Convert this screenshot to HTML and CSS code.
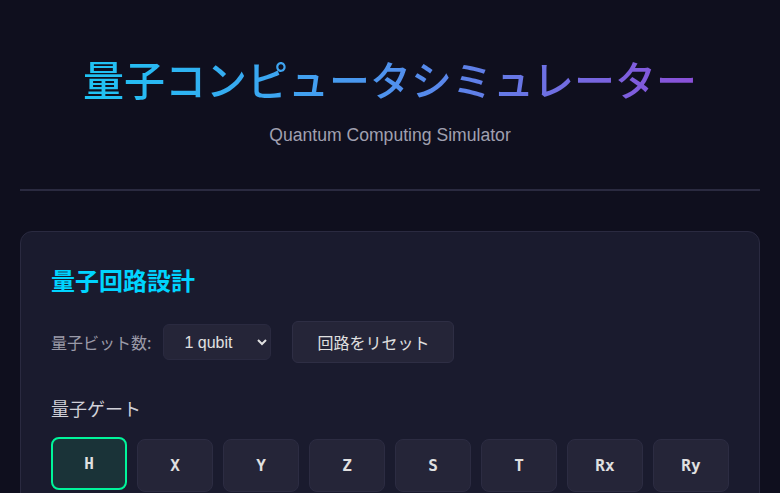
FILE: index.html
```html
<!DOCTYPE html>
<html lang="ja">
<head>
<meta charset="utf-8">
<title>量子コンピュータシミュレーター</title>
<link rel="stylesheet" href="styles.css">
</head>
<body>
<div class="app">
  <header class="header">
    <h1 class="title">量子コンピュータシミュレーター</h1>
    <p class="subtitle">Quantum Computing Simulator</p>
  </header>
  <hr class="divider">
  <section class="card">
    <h2 class="card-title">量子回路設計</h2>
    <div class="controls">
      <label class="label" for="qubits">量子ビット数:</label>
      <select id="qubits" class="select">
        <option>1 qubit</option>
        <option>2 qubits</option>
        <option>3 qubits</option>
      </select>
      <button class="btn">回路をリセット</button>
    </div>
    <h3 class="section-title">量子ゲート</h3>
    <div class="gates">
      <button class="gate gate-active">H</button>
      <button class="gate">X</button>
      <button class="gate">Y</button>
      <button class="gate">Z</button>
      <button class="gate">S</button>
      <button class="gate">T</button>
      <button class="gate">Rx</button>
      <button class="gate">Ry</button>
    </div>
  </section>
</div>
</body>
</html>
```

FILE: styles.css
```css
* { box-sizing: border-box; }
html, body { margin: 0; padding: 0; }
body {
  background: #0f0f1e;
  color: #e0e0e0;
  font-family: "Liberation Sans", "Noto Sans CJK JP", sans-serif;
  overflow: hidden;
}
.app { padding: 20px; }
.header { text-align: center; }
.title {
  display: inline-block;
  margin: 33px 0 0;
  font-family: "Noto Sans CJK JP", sans-serif;
  font-size: 41px;
  font-weight: 500;
  line-height: 50px;
  background: linear-gradient(90deg, #1ec4f4 0%, #4f92ee 50%, #8b4fd8 100%);
  -webkit-background-clip: text;
  background-clip: text;
  color: transparent;
}
.subtitle {
  margin: 21px 0 0;
  font-size: 17.6px;
  line-height: 22px;
  color: #a0a0b0;
}
.divider {
  margin: 43px 0 0;
  border: 0;
  height: 2px;
  background: #2a2a40;
}
.card {
  margin-top: 40px;
  background: #1a1b2e;
  border: 1px solid #2a2a40;
  border-radius: 12px;
  padding: 30px;
  min-height: 300px;
}
.card-title {
  margin: 0;
  font-family: "Noto Sans CJK JP", sans-serif;
  font-size: 24px;
  font-weight: 700;
  line-height: 36px;
  color: #00d4ff;
}
.controls {
  margin-top: 23px;
  display: flex;
  align-items: center;
  gap: 12px;
}
.label {
  font-family: "Noto Sans CJK JP", "Liberation Sans", sans-serif;
  font-size: 16px;
  color: #9a9aa8;
}
.select {
  width: 108px;
  height: 36px;
  padding: 0 12px 0 16px;
  background-color: #252538;
  color: #e0e0e0;
  border: 1px solid #2a2a40;
  border-radius: 6px;
  font-family: "Liberation Sans", sans-serif;
  font-size: 16px;
}
.btn {
  margin-left: 9px;
  height: 42px;
  padding: 0 24px;
  background: #252538;
  color: #e0e0e0;
  border: 1px solid #2e2e44;
  border-radius: 6px;
  font-family: "Noto Sans CJK JP", sans-serif;
  font-size: 16px;
}
.section-title {
  margin: 33px 0 0;
  font-family: "Noto Sans CJK JP", sans-serif;
  font-size: 18px;
  font-weight: 400;
  line-height: 24px;
  color: #d0d0d8;
}
.gates {
  margin-top: 19px;
  display: grid;
  grid-template-columns: repeat(8, 1fr);
  gap: 10px;
}
.gate {
  height: 53px;
  background: #252538;
  border: 1px solid #2c2c42;
  border-radius: 8px;
  color: #e0e0e0;
  font-family: "DejaVu Sans Mono", monospace;
  font-size: 16px;
  font-weight: 700;
  padding: 0;
}
.gate-active {
  background: #1a3338;
  border: 2px solid #00f59b;
  transform: translateY(-2px);
}
```
